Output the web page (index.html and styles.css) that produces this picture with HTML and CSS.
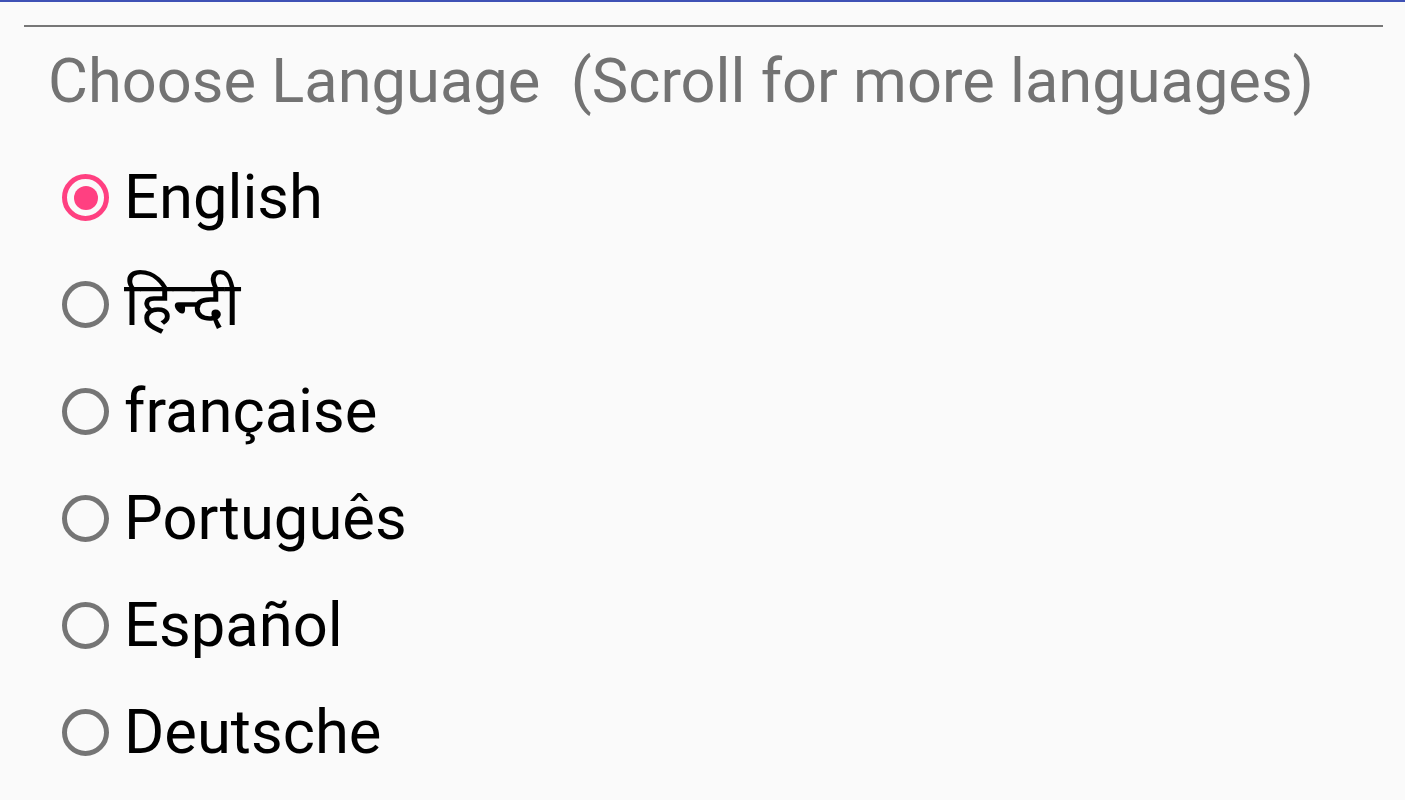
FILE: index.html
```html
<!DOCTYPE html>
<html lang="en">
<head>
<meta charset="utf-8">
<title>Choose Language</title>
<link rel="stylesheet" href="styles.css">
</head>
<body>
<div class="topbar"></div>
<main class="panel">
  <hr class="divider">
  <h1 class="title">Choose Language&nbsp; (Scroll for more languages)</h1>
  <div class="options" role="radiogroup">
    <div class="option checked"><span class="radio"></span><span class="label">English</span></div>
    <div class="option"><span class="radio"></span><span class="label" lang="hi">हिन्दी</span></div>
    <div class="option"><span class="radio"></span><span class="label">française</span></div>
    <div class="option"><span class="radio"></span><span class="label">Português</span></div>
    <div class="option"><span class="radio"></span><span class="label">Español</span></div>
    <div class="option"><span class="radio"></span><span class="label">Deutsche</span></div>
  </div>
</main>
</body>
</html>
```
FILE: styles.css
```css
html, body {
  margin: 0;
  padding: 0;
  background: #fafafa;
  height: 100%;
  overflow: hidden;
}
body {
  font-family: Roboto, "Noto Sans", "Noto Sans Devanagari", sans-serif;
}
.topbar {
  height: 2px;
  background: #3f51b5;
}
.panel {
  padding: 0 22px 0 24px;
}
.divider {
  margin: 23px 0 0 0;
  border: 0;
  height: 2px;
  background: #777777;
}
.title {
  margin: 0;
  padding-left: 24px;
  font-size: 61.4px;
  font-weight: 400;
  color: #737373;
  line-height: 112px;
  margin-top: -2px;
  white-space: nowrap;
}
.options {
  display: flex;
  flex-direction: column;
  padding-left: 38px;
  margin-top: 7px;
}
.option {
  display: flex;
  align-items: center;
  height: 107px;
  gap: 15px;
}
.radio {
  box-sizing: border-box;
  width: 47px;
  height: 47px;
  border: 5px solid #757575;
  border-radius: 50%;
  display: flex;
  align-items: center;
  justify-content: center;
  flex: none;
}
.option.checked .radio {
  border-color: #ff4081;
}
.option.checked .radio::after {
  content: "";
  width: 24px;
  height: 24px;
  border-radius: 50%;
  background: #ff4081;
}
.label {
  font-size: 61.5px;
  color: #000;
  line-height: 1;
}
```
